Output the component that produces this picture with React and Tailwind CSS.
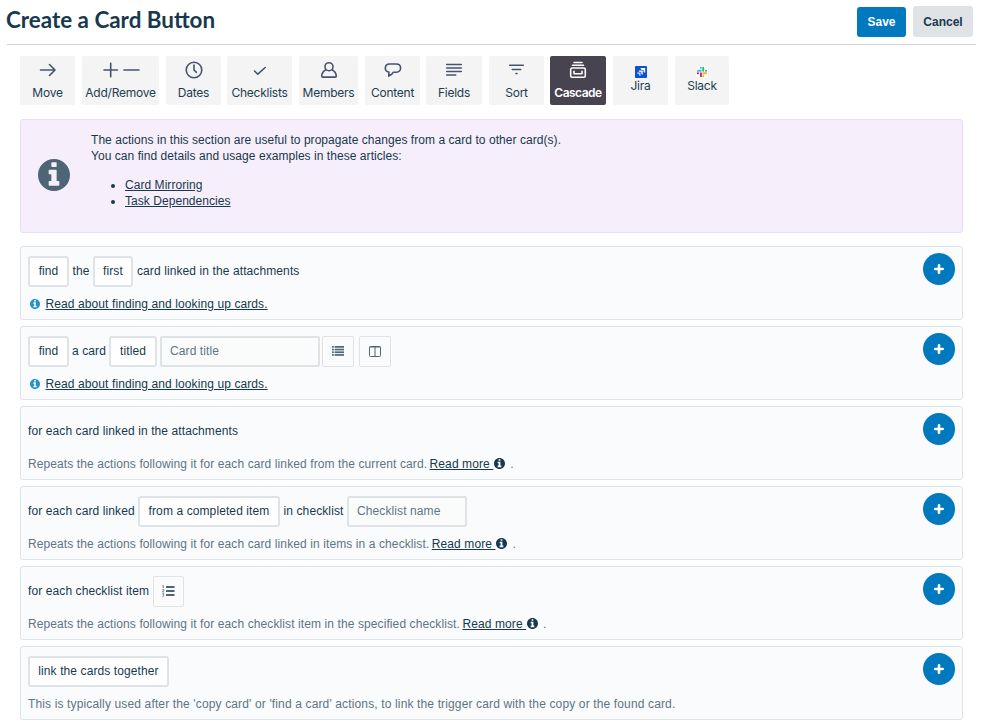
import clsx from 'clsx';

const stroke = {
    fill: 'none',
    stroke: 'currentColor',
    strokeWidth: 1.6,
    strokeLinecap: 'round',
    strokeLinejoin: 'round',
};

const icons = {
    move: <svg width="18" height="18" viewBox="0 0 18 18" {...stroke}><path d="M1.5 9H16M10.5 3.5L16 9l-5.500 5.500" /></svg>,
    addRemove: <svg width="38" height="18" viewBox="0 0 38 18" {...stroke}><path d="M2 9H15.500M8.700 2.300V15.700M22 9H37" /></svg>,
    dates: <svg width="18" height="18" viewBox="0 0 18 18" {...stroke}><circle cx="9" cy="9" r="7.800" /><path d="M9 4v5l2.400 2.300" /></svg>,
    checklists: <svg width="18" height="18" viewBox="0 0 18 18" {...stroke}><path d="M3.500 10L6.800 13.200l7.400-6.700" /></svg>,
    members: (
        <svg width="18" height="18" viewBox="0 0 18 18" {...stroke}>
            <circle cx="9" cy="5.700" r="4" />
            <path d="M5.900 8.700C3.500 9.800 2 12 1.700 14.900c0 .8.400 1.200 1.200 1.200h12.200c.8 0 1.200-.4 1.200-1.200C16 12 14.500 9.800 12.100 8.700" />
        </svg>
    ),
    content: <svg width="18" height="18" viewBox="0 0 18 18" {...stroke}><path d="M5.800 3h6.400c2.700 0 4.400 1.700 4.400 4s-1.700 4.200-4.200 4.200H9.500c-1 1.700-2.700 3-4.700 3.900l.1-4.100C2.600 10.600 1.300 9.200 1.300 7.200 1.300 4.700 3.100 3 5.800 3z" /></svg>,
    fields: <svg width="18" height="18" viewBox="0 0 18 18" {...stroke}><path d="M1.700 3.500h14.600M1.700 7h14.600M1.700 10.500h14.600M1.700 14h9" /></svg>,
    sort: <svg width="18" height="18" viewBox="0 0 18 18" {...stroke}><path d="M1.700 4.300h13.600M4.300 8.500h8.400M8 12.500h1" /></svg>,
    cascade: (
        <svg width="18" height="18" viewBox="0 0 18 18" {...stroke}>
            <path d="M5 1.500h8M3.500 4.300h11" />
            <rect x="1.700" y="7" width="14.600" height="9.300" rx="1.500" />
            <path d="M5 10.300v2.400h8v-2.400" />
        </svg>
    ),
    jira: (
        <svg width="12" height="12" viewBox="0 0 12 12">
            <rect width="12" height="12" rx="1" fill="#0b53ce" />
            <path d="M5.500 2.100h4.700v4.700C9 6.600 8.500 6 8.500 5.100V3.900H7.300c-1 0-1.800-.6-1.800-1.800z" fill="#fff" />
            <path d="M3.700 4.500h4.100v4.100c-1 0-1.600-.7-1.600-1.600v-.9H5.300c-1 0-1.600-.6-1.600-1.600z" fill="#e6efff" />
            <path d="M2 6.600h3.500v3.500c-.9 0-1.400-.6-1.400-1.400v-.7h-.7C2.600 8 2 7.500 2 6.600z" fill="#c5daff" />
        </svg>
    ),
    slack: (
        <svg width="12" height="12" viewBox="0 0 12 12">
            <rect width="12" height="12" rx="1" fill="#fff" />
            <g strokeWidth="1.900" strokeLinecap="round" fill="none">
                <path d="M4.900 1.800v.2M1.700 4.800h3.200" stroke="#36c5f0" />
                <path d="M7.200 1.700v3.100M9.900 4.800h.3" stroke="#2eb67d" />
                <path d="M7.200 10v.2M7.200 7.200h3" stroke="#ecb22e" />
                <path d="M4.900 7.200v3M1.700 7.200h.4" stroke="#e01e5a" />
            </g>
        </svg>
    ),
};

const tabs = [
    { key: 'move', label: 'Move', box: 'w-[55px] mr-[7px]' },
    { key: 'addRemove', label: 'Add/Remove', box: 'w-[77px] mr-[7px]' },
    { key: 'dates', label: 'Dates', box: 'w-[55px] mr-[6px]' },
    { key: 'checklists', label: 'Checklists', box: 'w-[65px] mr-[7px]' },
    { key: 'members', label: 'Members', box: 'w-[59px] mr-[7px]' },
    { key: 'content', label: 'Content', box: 'w-[55px] mr-[6px]' },
    { key: 'fields', label: 'Fields', box: 'w-[56px] mr-[7px]' },
    { key: 'sort', label: 'Sort', box: 'w-[55px] mr-[6px]' },
    { key: 'cascade', label: 'Cascade', box: 'w-[56px] mr-[7px]' },
    { key: 'jira', label: 'Jira', box: 'w-[55px] mr-[7px]', small: true },
    { key: 'slack', label: 'Slack', box: 'w-[54px]', small: true },
];

function Tab({ tab, active }) {
    return (
        <button
            type="button"
            className={clsx(
                'h-[49px] shrink-0 flex flex-col items-center rounded-[2px] font-[Inter,sans-serif] text-[12px] leading-[14px] whitespace-nowrap',
                tab.box,
                tab.small ? 'pt-[10px]' : 'pt-[5px]',
                active ? 'bg-[#474350] text-white font-semibold tracking-[-0.5px]' : 'bg-[#f4f4f4] text-[#1c3d52] tracking-[-0.25px]'
            )}
        >
            <span className={active ? 'text-white' : 'text-[#44546f]'}>{icons[tab.key]}</span>
            <span className={tab.small ? 'mt-[1px]' : 'mt-[7px]'}>{tab.label}</span>
        </button>
    );
}

function InfoCircle({ className }) {
    return (
        <svg viewBox="0 0 1536 1536" fill="currentColor" className={clsx('shrink-0', className)}>
            <path
                fillRule="evenodd"
                d="M1024 1248v-160c0-18-14-32-32-32h-96V544c0-18-14-32-32-32H544c-18 0-32 14-32 32v160c0 18 14 32 32 32h96v320h-96c-18 0-32 14-32 32v160c0 18 14 32 32 32h448c18 0 32-14 32-32zM896 352V192c0-18-14-32-32-32H672c-18 0-32 14-32 32v160c0 18 14 32 32 32h192c18 0 32-14 32-32zM1536 768c0 424-344 768-768 768S0 1192 0 768 344 0 768 0s768 344 768 768z"
            />
        </svg>
    );
}

function Chip({ children, className }) {
    return (
        <button type="button" className={clsx('h-[31px] shrink-0 rounded-[3px] border-2 border-[#dfe3e6] bg-white text-center whitespace-nowrap', className)}>
            {children}
        </button>
    );
}

function TextField({ placeholder, className }) {
    return (
        <input
            type="text"
            placeholder={placeholder}
            className={clsx('h-[31px] rounded-[2px] border-2 border-[#dfe3e6] bg-[#fafcfc] px-2 placeholder:text-[#5e7583] placeholder:opacity-100', className)}
        />
    );
}

function IconButton({ children, className }) {
    return (
        <button type="button" className={clsx('h-[31px] flex items-center justify-center rounded-[2px] border border-[#dfe3e6] text-[#4d6575]', className)}>
            {children}
        </button>
    );
}

function ListIcon() {
    return (
        <svg width="12" height="11" viewBox="0 0 12 11" fill="currentColor">
            {[0, 2.7, 5.4, 8.1].map((y) => (
                <g key={y}>
                    <rect x="0" y={y} width="1.800" height="1.700" />
                    <rect x="2.600" y={y} width="9.400" height="1.700" />
                </g>
            ))}
        </svg>
    );
}

function ColumnsIcon() {
    return (
        <svg width="12" height="11" viewBox="0 0 12 11" fill="none" stroke="currentColor">
            <rect x=".5" y=".5" width="11" height="10" rx="1" />
            <path d="M.5 1h11M6 1v9.500" />
        </svg>
    );
}

function NumberedListIcon() {
    return (
        <svg width="13" height="12" viewBox="0 0 13 12" fill="none" stroke="currentColor">
            <path d="M4 2h8.500M4 6h8.500M4 10h8.500" strokeWidth="1.900" />
            <path d="M.6.800l.7-.4v2.800M.4 4.600h1.400v.8L.5 6.900h1.600M.4 8.700h1.500l-.8 1 .9.600-.6 1H.4" strokeWidth=".8" />
        </svg>
    );
}

function Rule({ children, footer }) {
    return (
        <section className="h-[73.6px] shrink-0 flex justify-between rounded-[3px] border border-[#dfe3e6] bg-[#fafbfc] pl-[7px] pr-[7px]">
            <div className="flex flex-col pt-[8.500px]">
                <div className="h-[31px] flex items-center text-[#17394d]">{children}</div>
                <div className="mt-[9px] h-4 flex items-center leading-4 whitespace-pre text-[#5e7583]">{footer}</div>
            </div>
            <button type="button" className="mt-[6px] size-8 flex items-center justify-center rounded-full bg-[#0079bf] text-white">
                <svg width="10" height="10" viewBox="0 0 10 10" stroke="currentColor" strokeWidth="2.600" strokeLinecap="round" className="mb-px">
                    <path d="M1.300 5h7.400M5 1.300v7.400" />
                </svg>
            </button>
        </section>
    );
}

function LookupLink() {
    return (
        <>
            <InfoCircle className="size-[10px] ml-[2px] mr-[5.500px] text-[#298fca]" />
            <a href="#" className="underline text-[#17394d]">Read about finding and looking up cards.</a>
        </>
    );
}

function ReadMore({ text }) {
    return (
        <>
            <span>{text} </span>
            <a href="#" className="-ml-px underline text-[#17394d]">Read more </a>
            <InfoCircle className="size-[11px] ml-px mr-[5px] text-[#17394d]" />
            <span>.</span>
        </>
    );
}

export default function App() {
    return (
        <div className="w-[998px] h-[724px] overflow-hidden bg-white font-['Liberation_Sans',Arial,sans-serif] text-[12px] text-[#17394d]">
            <header className="ml-[7px] mr-[22px] h-[45px] flex items-start justify-between border-b border-[#d0d3d6]">
                <h1 className="-ml-px pt-[6px] font-[Lato,sans-serif] text-[22.400px] leading-[28px] font-bold text-[#17394d]">Create a Card Button</h1>
                <div className="flex pr-[3px] gap-[7px] font-bold">
                    <button type="button" className="mt-[7px] h-[30px] w-[49px] rounded-[3px] bg-[#0079bf] text-white">Save</button>
                    <button type="button" className="mt-[6px] h-[31px] w-[60px] rounded-[3px] bg-[#dfe3e6]">Cancel</button>
                </div>
            </header>

            <main className="ml-5 mr-[35px] flex flex-col">
                <nav className="mt-[11px] flex">
                    {tabs.map((tab) => (
                        <Tab key={tab.key} tab={tab} active={tab.key === 'cascade'} />
                    ))}
                </nav>

                <div className="mt-[14px] h-[114px] flex rounded-[3px] border border-[#ebdcf3] bg-[#f6eefa]">
                    <InfoCircle className="size-8 ml-[17px] mt-[39px] text-[#4d6575]" />
                    <div className="ml-[21px] pt-3 leading-[16.300px] tracking-[0.05px]">
                        <p>The actions in this section are useful to propagate changes from a card to other card(s).</p>
                        <p>You can find details and usage examples in these articles:</p>
                        <ul className="mt-3 ml-[34px] list-disc">
                            <li><a href="#" className="underline">Card Mirroring</a></li>
                            <li><a href="#" className="underline">Task Dependencies</a></li>
                        </ul>
                    </div>
                </div>

                <div className="mt-[13px] flex flex-col gap-[6.500px] tracking-[0.1px]">
                    <Rule footer={<LookupLink />}>
                        <Chip className="w-[41px]">find</Chip>
                        <span className="w-[24px] text-center">the</span>
                        <Chip className="w-[40px]">first</Chip>
                        <span className="ml-1">card linked in the attachments</span>
                    </Rule>

                    <Rule footer={<LookupLink />}>
                        <Chip className="w-[41px]">find</Chip>
                        <span className="w-[40px] text-center">a card</span>
                        <Chip className="w-[48px]">titled</Chip>
                        <TextField placeholder="Card title" className="ml-[3px] w-[160px]" />
                        <IconButton className="ml-[2px] w-8"><ListIcon /></IconButton>
                        <IconButton className="ml-[5px] w-8"><ColumnsIcon /></IconButton>
                    </Rule>

                    <Rule footer={<ReadMore text="Repeats the actions following it for each card linked from the current card." />}>
                        <span>for each card linked in the attachments</span>
                    </Rule>

                    <Rule footer={<ReadMore text="Repeats the actions following it for each card linked in items in a checklist." />}>
                        <span className="w-[110px]">for each card linked</span>
                        <Chip className="w-[142px]">from a completed item</Chip>
                        <span className="w-[67px] text-center">in checklist</span>
                        <TextField placeholder="Checklist name" className="w-[120px]" />
                    </Rule>

                    <Rule footer={<ReadMore text="Repeats the actions following it for each checklist item in the specified checklist." />}>
                        <span className="w-[125px]">for each checklist item</span>
                        <IconButton className="w-[31px]"><NumberedListIcon /></IconButton>
                    </Rule>

                    <Rule footer={<span className="tracking-[0.140px]">This is typically used after the 'copy card' or 'find a card' actions, to link the trigger card with the copy or the found card.</span>}>
                        <Chip className="w-[141px]">link the cards together</Chip>
                    </Rule>
                </div>
            </main>
        </div>
    );
}
